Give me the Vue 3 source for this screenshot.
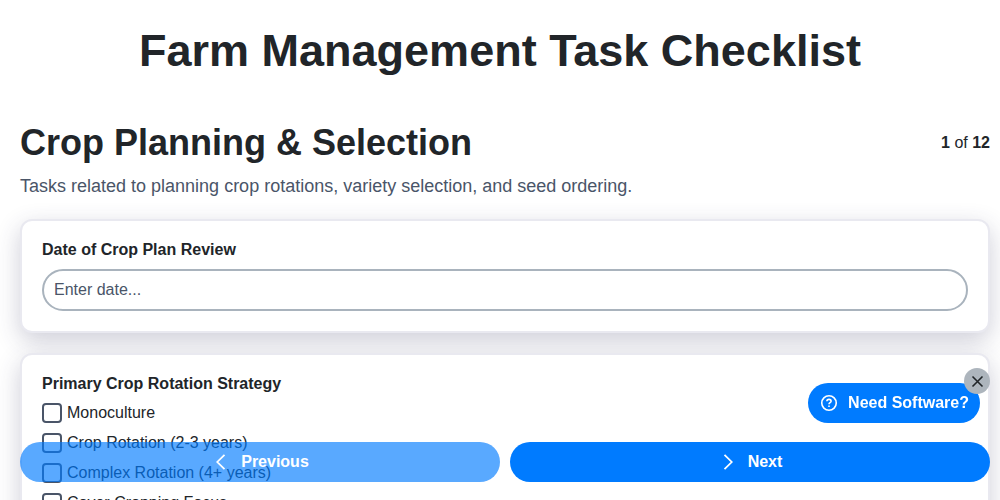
<script setup>
const strategies = [
  "Monoculture",
  "Crop Rotation (2-3 years)",
  "Complex Rotation (4+ years)",
  "Cover Cropping Focus",
];
</script>

<template>
  <div class="page">
    <h1 class="title">Farm Management Task Checklist</h1>

    <div class="section-head">
      <h2>Crop Planning &amp; Selection</h2>
      <div class="progress"><b>1</b> of <b>12</b></div>
    </div>
    <p class="section-desc">Tasks related to planning crop rotations, variety selection, and seed ordering.</p>

    <div class="card">
      <label class="field-label" for="review-date">Date of Crop Plan Review</label>
      <input id="review-date" class="text-input" type="text" placeholder="Enter date..." />
    </div>

    <div class="card">
      <div class="field-label">Primary Crop Rotation Strategy</div>
      <label v-for="item in strategies" :key="item" class="check-row">
        <input type="checkbox" />
        <span>{{ item }}</span>
      </label>
    </div>

    <div class="nav-buttons">
      <button class="nav-btn disabled">
        <svg width="20" height="20" viewBox="0 0 16 16" fill="none" stroke="currentColor" stroke-width="1.4">
          <path d="M10.800 2.300 5 8l5.800 5.700" />
        </svg>
        Previous
      </button>
      <button class="nav-btn">
        <svg width="20" height="20" viewBox="0 0 16 16" fill="none" stroke="currentColor" stroke-width="1.4">
          <path d="M5.200 2.300 11 8l-5.800 5.700" />
        </svg>
        Next
      </button>
    </div>

    <div class="promo">
      <button class="promo-btn">
        <svg width="18" height="18" viewBox="0 0 18 18" fill="none" stroke="currentColor" stroke-width="1.600">
          <circle cx="9" cy="9" r="7.250" />
          <path d="M6.900 7.300c0-1.200.9-1.900 2.100-1.900s2.100.7 2.100 1.800c0 1.500-2.100 1.500-2.100 3" />
          <path d="M9 11.500v1.500" />
        </svg>
        Need Software?
      </button>
      <button class="promo-close" aria-label="Close">
        <svg width="13" height="13" viewBox="0 0 13 13" fill="none" stroke="currentColor" stroke-width="1.600">
          <path d="M1.500 1.500l10 10M11.500 1.500l-10 10" />
        </svg>
      </button>
    </div>
  </div>
</template>

<style scoped>
.page {
  padding: 20px 10px 20px 20px;
  color: #212529;
  font-family: "Liberation Sans", Arial, sans-serif;
}

.title {
  margin: 1px 10px 40px 0;
  font-size: 45px;
  line-height: 60px;
  font-weight: 700;
  text-align: center;
}

.section-head {
  display: flex;
  justify-content: space-between;
  align-items: flex-start;
}

.section-head h2 {
  margin: 0;
  font-size: 36px;
  line-height: 44px;
  font-weight: 700;
}

.progress {
  margin-top: 12px;
  font-size: 16px;
  line-height: 20px;
}

.section-desc {
  margin: 9px 0 21px;
  font-size: 18px;
  line-height: 24px;
  color: #4a5568;
}

.card {
  background: #fff;
  border: 2px solid #e9e9f0;
  border-radius: 12px;
  padding: 20px;
  margin-bottom: 20px;
  box-shadow: 0 8px 24px rgba(50, 50, 93, 0.24);
}

.field-label {
  display: block;
  margin-bottom: 10px;
  font-size: 16px;
  line-height: 18px;
  font-weight: 700;
}

.text-input {
  display: block;
  box-sizing: border-box;
  width: 100%;
  height: 42px;
  padding: 0 10px;
  border: 2px solid #a9b3bd;
  border-radius: 21px;
  background: #fff;
  font: 16px "Liberation Sans", Arial, sans-serif;
  color: #212529;
}

.text-input::placeholder {
  color: #4a5568;
  opacity: 1;
}

.check-row {
  display: flex;
  align-items: center;
  gap: 5px;
  height: 20px;
  margin-bottom: 10px;
  font-size: 16px;
  line-height: 20px;
}

.check-row input {
  appearance: none;
  box-sizing: border-box;
  flex: none;
  width: 20px;
  height: 20px;
  margin: 0;
  border: 2px solid #4a5568;
  border-radius: 4px;
  background: #fff;
}

.nav-buttons {
  position: fixed;
  left: 20px;
  right: 10px;
  bottom: 18px;
  display: flex;
  gap: 10px;
}

.nav-btn {
  flex: 1;
  display: flex;
  align-items: center;
  justify-content: center;
  gap: 10px;
  height: 40px;
  border: none;
  border-radius: 20px;
  background: #007bff;
  color: #fff;
  font: 700 16px "Liberation Sans", Arial, sans-serif;
}

.nav-btn.disabled {
  opacity: 0.65;
}

.promo {
  position: fixed;
  right: 20px;
  bottom: 77px;
}

.promo-btn {
  display: flex;
  align-items: center;
  gap: 10px;
  height: 40px;
  padding: 0 11px 0 12px;
  border: none;
  border-radius: 20px;
  background: #007bff;
  color: #fff;
  font: 700 16px "Liberation Sans", Arial, sans-serif;
}

.promo-close {
  position: absolute;
  top: -15px;
  right: -10px;
  display: flex;
  align-items: center;
  justify-content: center;
  width: 26px;
  height: 26px;
  padding: 0;
  border: none;
  border-radius: 50%;
  background: #adb5bd;
  color: #212529;
}
</style>
